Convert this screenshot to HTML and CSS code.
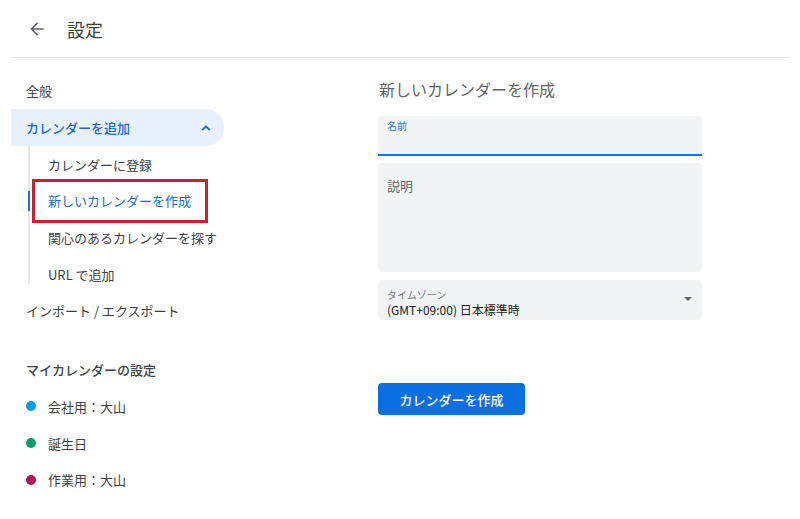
FILE: index.html
```html
<!DOCTYPE html>
<html lang="ja">
<head>
<meta charset="utf-8">
<link rel="stylesheet" href="styles.css">
</head>
<body>
<header class="top">
  <svg class="back" viewBox="0 0 24 24" width="20" height="20"><path d="M20 11H7.83l5.59-5.59L12 4l-8 8 8 8 1.41-1.41L7.83 13H20v-2z" fill="#5f6368"/></svg>
  <h1 class="title">設定</h1>
</header>
<main class="main">
  <nav class="side">
    <div class="row">全般</div>
    <div class="row pill">
      <span>カレンダーを追加</span>
      <svg class="chev" viewBox="0 0 10 6" width="10" height="6"><path d="M1.2 5.2L5 1.6l3.8 3.6" fill="none" stroke="#1967d2" stroke-width="1.8"/></svg>
    </div>
    <div class="sub">
      <div class="row subitem">カレンダーに登録</div>
      <div class="row subitem active">新しいカレンダーを作成<span class="mark"></span></div>
      <div class="row subitem">関心のあるカレンダーを探す</div>
      <div class="row subitem">URL で追加</div>
    </div>
    <div class="row">インポート / エクスポート</div>
    <div class="row heading">マイカレンダーの設定</div>
    <div class="row cal"><span class="dot blue"></span>会社用：大山</div>
    <div class="row cal"><span class="dot green"></span>誕生日</div>
    <div class="row cal"><span class="dot red"></span>作業用：大山</div>
  </nav>
  <section class="content">
    <h2 class="ctitle">新しいカレンダーを作成</h2>
    <div class="field name"><span class="flabel">名前</span></div>
    <div class="field desc"><span class="placeholder">説明</span></div>
    <div class="field tz">
      <div class="tzinfo">
        <span class="tzlabel">タイムゾーン</span>
        <span class="tzvalue">(GMT+09:00) 日本標準時</span>
      </div>
      <span class="caret"></span>
    </div>
    <button class="btn">カレンダーを作成</button>
  </section>
</main>
</body>
</html>
```
FILE: styles.css
```css
* { box-sizing: border-box; }
body {
  margin: 0;
  background: #fff;
  font-family: "Noto Sans CJK JP", "Roboto", "Noto Sans", sans-serif;
  color: #3c4043;
}
.top {
  height: 58px;
  margin: 0 10px 0 11px;
  padding-left: 16px;
  display: flex;
  align-items: center;
  border-bottom: 1px solid #e3e3e3;
}
.back { display: block; margin-top: 1px; }
.title {
  margin: 0 0 0 20px;
  font-size: 18px;
  font-weight: 400;
  color: #3c4043;
  line-height: 24px;
}
.main {
  display: flex;
  padding-left: 11px;
}
.side {
  width: 213px;
  padding-top: 14.5px;
  font-size: 13px;
}
.row {
  height: 36.7px;
  display: flex;
  align-items: center;
  padding-left: 15px;
  white-space: nowrap;
}
.pill {
  background: #e8f0fe;
  color: #1967d2;
  border-radius: 0 18px 18px 0;
  justify-content: space-between;
  padding-right: 13px;
  font-weight: 500;
}
.chev { display: block; }
.sub {
  margin-left: 17px;
  position: relative;
}
.sub::before {
  content: "";
  position: absolute;
  left: 0;
  top: 0;
  width: 2px;
  height: 138px;
  background: #e6e6e6;
}
.subitem {
  padding-left: 20px;
  position: relative;
}
.active { color: #1967d2; }
.active::before {
  content: "";
  position: absolute;
  left: 0;
  top: 8px;
  width: 2px;
  height: 20px;
  background: #1a73e8;
}
.mark {
  position: absolute;
  left: 4px;
  top: -3.6px;
  width: 176px;
  height: 44px;
  border: 3px solid #c0262d;
}
.heading { margin-top: 22px; font-weight: 500; }
.cal { gap: 12px; }
.dot {
  width: 10px;
  height: 10px;
  border-radius: 50%;
  display: inline-block;
}
.blue { background: #039be5; }
.green { background: #0b9e6a; }
.red { background: #ad1457; }
.content {
  margin-left: 154px;
  width: 324px;
  padding-top: 19px;
}
.ctitle {
  margin: 0 0 15px 1px;
  font-size: 16px;
  font-weight: 400;
  line-height: 24px;
  color: #5f6368;
}
.field {
  background: #f1f3f4;
  border-radius: 4px 4px 0 0;
  width: 324px;
}
.name {
  height: 40px;
  border-bottom: 2px solid #1a73e8;
  padding: 3px 9px 0;
}
.flabel {
  font-size: 10px;
  color: #1a73e8;
  line-height: 14px;
  display: block;
}
.desc {
  margin-top: 7px;
  height: 109px;
  border-radius: 4px;
  padding: 9px 9px 0;
}
.placeholder {
  font-size: 13px;
  color: #5f6368;
  line-height: 18px;
}
.tz {
  margin-top: 8px;
  height: 40px;
  border-radius: 4px;
  display: flex;
  justify-content: space-between;
  align-items: flex-start;
  padding: 8px 10px 0 9px;
}
.tzinfo { display: flex; flex-direction: column; }
.tzlabel { font-size: 10px; color: #70757a; line-height: 14px; }
.tzvalue { font-size: 12px; color: #202124; line-height: 16px; }
.caret {
  margin-top: 9px;
  width: 0;
  height: 0;
  border-left: 4px solid transparent;
  border-right: 4px solid transparent;
  border-top: 4px solid #5f6368;
}
.btn {
  margin-top: 63px;
  height: 32px;
  width: 147px;
  border: 0;
  border-radius: 4px;
  background: #0b6fe0;
  color: #fff;
  font-family: inherit;
  font-size: 13px;
  font-weight: 500;
  padding: 0;
}
```
